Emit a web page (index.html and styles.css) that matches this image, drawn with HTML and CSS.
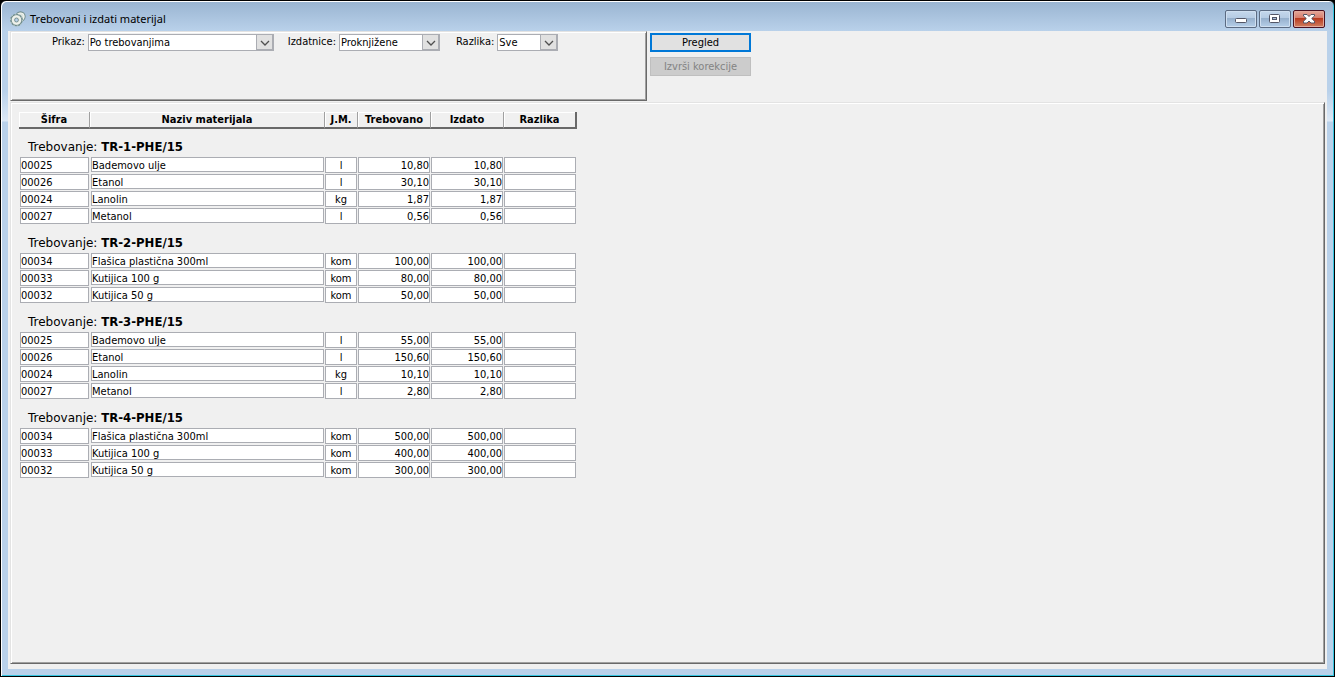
FILE: index.html
```html
<!DOCTYPE html>
<html lang="sr-Latn">
<head>
  <meta charset="UTF-8">
  <meta name="viewport" content="width=device-width, initial-scale=1.0">
  <title>Trebovani i izdati materijal</title>
  <link rel="stylesheet" href="styles.css">
</head>
<body>
  <div class="window">
    <header class="title-bar">
      <svg class="app-icon" width="16" height="16" viewBox="0 0 16 16">
        <circle cx="10.500" cy="5.500" r="4.500" fill="#dde5e0" stroke="#6f8c8c" stroke-width="1.300"/>
        <circle cx="10.500" cy="5.500" r="3.500" fill="none" stroke="#eef2ec" stroke-width="1.200"/>
        <circle cx="6.500" cy="9" r="5.600" fill="#dfe5df" stroke="#6f8c8c" stroke-width="1.500"/>
        <circle cx="6.500" cy="9" r="6" fill="none" stroke="#c9d6d4" stroke-width="1" stroke-dasharray="1.500 2.200"/>
        <circle cx="6.500" cy="9" r="3.700" fill="none" stroke="#f0f2ec" stroke-width="1.500"/>
        <circle cx="6.500" cy="9" r="1.900" fill="#b9d1ea" stroke="#7d9696"/>
      </svg>
      <h1>Trebovani i izdati materijal</h1>
      <div class="window-buttons">
        <button class="win-btn" aria-label="Minimize">
          <svg width="12" height="10" viewBox="0 0 12 10"><rect x=".5" y="4.500" width="11" height="4" rx="1" fill="#fff" stroke="#535666"/></svg>
        </button>
        <button class="win-btn" aria-label="Maximize">
          <svg width="12" height="10" viewBox="0 0 12 10"><rect x=".5" y=".5" width="10" height="8" rx="1" fill="#fff" stroke="#535666"/><rect x="3.500" y="3.500" width="4" height="2" fill="#a9c0da" stroke="#535666"/></svg>
        </button>
        <button class="win-btn win-close" aria-label="Close">
          <svg width="12" height="10" viewBox="0 0 12 10"><path d="M.5.5h3.500l2 2 2-2h3.500v1.500L8.700 4.500l2.800 2.700v1.800H8l-2-2-2 2H.5V7.200l2.800-2.700L.5 2z" fill="#fff" stroke="#535666"/></svg>
        </button>
      </div>
    </header>
    <main class="client">
      <div class="toolbar">
        <form class="filters">
          <label for="prikaz">Prikaz:</label>
          <span class="combo combo-wide">
            <select id="prikaz"><option>Po trebovanjima</option></select>
            <svg class="arrow" viewBox="0 0 15 14"><path d="M4 6l4 4 4-4" stroke-width="1.300"/></svg>
          </span>
          <label for="izdatnice">Izdatnice:</label>
          <span class="combo combo-mid">
            <select id="izdatnice"><option>Proknjižene</option></select>
            <svg class="arrow" viewBox="0 0 15 14"><path d="M4 6l4 4 4-4" stroke-width="1.300"/></svg>
          </span>
          <label for="razlika">Razlika:</label>
          <span class="combo combo-small">
            <select id="razlika"><option>Sve</option></select>
            <svg class="arrow" viewBox="0 0 15 14"><path d="M4 6l4 4 4-4" stroke-width="1.300"/></svg>
          </span>
        </form>
        <div class="actions">
          <button class="btn btn-default">Pregled</button>
          <button class="btn" disabled>Izvrši korekcije</button>
        </div>
      </div>
      <section class="report">
        <table>
          <colgroup>
            <col class="col-code"><col class="col-name"><col class="col-unit"><col class="col-num"><col class="col-num"><col class="col-num">
          </colgroup>
          <thead>
            <tr><th>Šifra</th><th>Naziv materijala</th><th>J.M.</th><th>Trebovano</th><th>Izdato</th><th>Razlika</th></tr>
          </thead>
          <tbody>
            <tr class="group"><td colspan="6">Trebovanje: <b>TR-1-PHE/15</b></td></tr>
            <tr><td><div>00025</div></td><td><div>Bademovo ulje</div></td><td><div>l</div></td><td><div>10,80</div></td><td><div>10,80</div></td><td><div></div></td></tr>
            <tr><td><div>00026</div></td><td><div>Etanol</div></td><td><div>l</div></td><td><div>30,10</div></td><td><div>30,10</div></td><td><div></div></td></tr>
            <tr><td><div>00024</div></td><td><div>Lanolin</div></td><td><div>kg</div></td><td><div>1,87</div></td><td><div>1,87</div></td><td><div></div></td></tr>
            <tr><td><div>00027</div></td><td><div>Metanol</div></td><td><div>l</div></td><td><div>0,56</div></td><td><div>0,56</div></td><td><div></div></td></tr>
          </tbody>
          <tbody>
            <tr class="group"><td colspan="6">Trebovanje: <b>TR-2-PHE/15</b></td></tr>
            <tr><td><div>00034</div></td><td><div>Flašica plastična 300ml</div></td><td><div>kom</div></td><td><div>100,00</div></td><td><div>100,00</div></td><td><div></div></td></tr>
            <tr><td><div>00033</div></td><td><div>Kutijica 100 g</div></td><td><div>kom</div></td><td><div>80,00</div></td><td><div>80,00</div></td><td><div></div></td></tr>
            <tr><td><div>00032</div></td><td><div>Kutijica 50 g</div></td><td><div>kom</div></td><td><div>50,00</div></td><td><div>50,00</div></td><td><div></div></td></tr>
          </tbody>
          <tbody>
            <tr class="group"><td colspan="6">Trebovanje: <b>TR-3-PHE/15</b></td></tr>
            <tr><td><div>00025</div></td><td><div>Bademovo ulje</div></td><td><div>l</div></td><td><div>55,00</div></td><td><div>55,00</div></td><td><div></div></td></tr>
            <tr><td><div>00026</div></td><td><div>Etanol</div></td><td><div>l</div></td><td><div>150,60</div></td><td><div>150,60</div></td><td><div></div></td></tr>
            <tr><td><div>00024</div></td><td><div>Lanolin</div></td><td><div>kg</div></td><td><div>10,10</div></td><td><div>10,10</div></td><td><div></div></td></tr>
            <tr><td><div>00027</div></td><td><div>Metanol</div></td><td><div>l</div></td><td><div>2,80</div></td><td><div>2,80</div></td><td><div></div></td></tr>
          </tbody>
          <tbody>
            <tr class="group"><td colspan="6">Trebovanje: <b>TR-4-PHE/15</b></td></tr>
            <tr><td><div>00034</div></td><td><div>Flašica plastična 300ml</div></td><td><div>kom</div></td><td><div>500,00</div></td><td><div>500,00</div></td><td><div></div></td></tr>
            <tr><td><div>00033</div></td><td><div>Kutijica 100 g</div></td><td><div>kom</div></td><td><div>400,00</div></td><td><div>400,00</div></td><td><div></div></td></tr>
            <tr><td><div>00032</div></td><td><div>Kutijica 50 g</div></td><td><div>kom</div></td><td><div>300,00</div></td><td><div>300,00</div></td><td><div></div></td></tr>
          </tbody>
        </table>
      </section>
    </main>
  </div>
</body>
</html>
```
FILE: styles.css
```css
* {
  box-sizing: border-box;
}
body {
  margin: 0;
  background: #000;
  font-family: Tahoma, "DejaVu Sans Condensed", "DejaVu Sans", sans-serif;
  font-size: 11px;
  color: #000;
}
.window {
  display: flex;
  flex-direction: column;
  min-height: 100vh;
  padding: 0 6px 7px;
  border: 1px solid #000;
  border-radius: 6px 6px 0 0;
  background: linear-gradient(#99b4d1, #b9d1ea 30px, #b9d1ea 90px, #dce8f5 120px, #b9d1ea 121px);
  box-shadow: inset 1px 1px #fff, inset -1px -1px #35c5e0;
}

/* title bar */
.title-bar {
  display: flex;
  align-items: center;
  height: 30px;
  padding: 6px 3px 0 3px;
}
.app-icon {
  margin-right: 4px;
}
.title-bar h1 {
  flex: 1;
  margin: 0;
  font: 11px/16px "Segoe UI", "Noto Sans", sans-serif;
}
.window-buttons {
  display: flex;
  gap: 2px;
}
.win-btn {
  display: flex;
  align-items: center;
  justify-content: center;
  width: 32px;
  height: 18px;
  padding: 0;
  border: 1px solid #5b6b82;
  border-radius: 2px;
  background: linear-gradient(#c5d8ec, #b5cbe3 45%, #96b0cc 46%, #b6cfe9);
  box-shadow: inset 0 0 0 1px #cfdff0;
}
.win-close {
  border-color: #4a1020;
  background: linear-gradient(#e4a79a, #d67c6b 45%, #b9391f 46%, #d08060);
  box-shadow: inset 0 0 0 1px #e3a99c;
}

/* client area */
.client {
  flex: 1;
  display: flex;
  flex-direction: column;
  margin: 0 1px;
  padding: 0 2px 5px;
  background: #f0f0f0;
}
.toolbar {
  display: flex;
  gap: 3px;
}
.filters,
.report {
  border: 1px solid;
  border-color: #e3e3e3 #696969 #696969 #e3e3e3;
  box-shadow: inset 1px 1px #fff, inset -1px -1px #a0a0a0;
}
.filters {
  display: flex;
  align-items: flex-start;
  width: 637px;
  height: 70px;
  padding: 2px 0 0 41px;
}
.filters label {
  margin-right: 3px;
  line-height: 16px;
}
.combo {
  position: relative;
  margin-right: 14px;
}
.combo-wide {
  width: 186px;
}
.combo-mid {
  width: 101px;
  margin-right: 16px;
}
.combo-small {
  width: 61px;
}
.combo select {
  display: block;
  width: 100%;
  height: 17px;
  padding: 0 18px 1px 1px;
  border: 1px solid #abadb3;
  border-radius: 0;
  appearance: none;
  background: #fff;
  font: inherit;
  color: inherit;
}
.arrow {
  position: absolute;
  top: 0;
  right: 0;
  width: 18px;
  height: 17px;
  border: 1px solid #abadb3;
  border-width: 1px 2px 2px 1px;
  background: #e1e1e1;
  fill: none;
  stroke: #505050;
  pointer-events: none;
}
.actions {
  display: flex;
  flex-direction: column;
  gap: 5px;
  padding-top: 2px;
}
.btn {
  width: 101px;
  height: 19px;
  padding: 0;
  border: 1px solid #adadad;
  background: #e1e1e1;
  font: inherit;
  color: #000;
}
.btn-default {
  border: 2px solid #0078d7;
}
.btn:disabled {
  border-color: #bfbfbf;
  background: #ccc;
  color: #838383;
}
.report {
  flex: 1;
  margin-top: 1px;
  padding: 9px 8px;
}

/* report table */
table {
  width: 558px;
  table-layout: fixed;
  border-collapse: separate;
  border-spacing: 0;
}
.col-code { width: 71px; }
.col-name { width: 235px; }
.col-unit { width: 33px; }
.col-num { width: 73px; }
th {
  height: 17px;
  padding: 1px 0 0;
  border-right: 1px solid #a0a0a0;
  border-bottom: 2px solid #696969;
  box-shadow: inset 1px 1px #fff;
  line-height: 14px;
}
th:last-child {
  border-right: 2px solid #696969;
}
td {
  padding: 0 1px 1px 0;
  vertical-align: top;
}
td:first-child,
td:nth-child(2) {
  padding-left: 1px;
}
td div {
  height: 16px;
  border: 1px solid #abadb3;
  background: #fff;
  line-height: 15px;
  white-space: nowrap;
}
td:nth-child(2) div {
  height: 15px;
}
td:nth-child(n+3) {
  text-align: center;
}
td:nth-child(n+4) {
  text-align: right;
}
.group td {
  height: 28px;
  padding: 8px 0 0 9px;
  font-family: Verdana, "DejaVu Sans", sans-serif;
  font-size: 12px;
  line-height: 20px;
}
.group b {
  font-family: Tahoma, "DejaVu Sans Condensed", sans-serif;
  font-size: 13px;
}
```
